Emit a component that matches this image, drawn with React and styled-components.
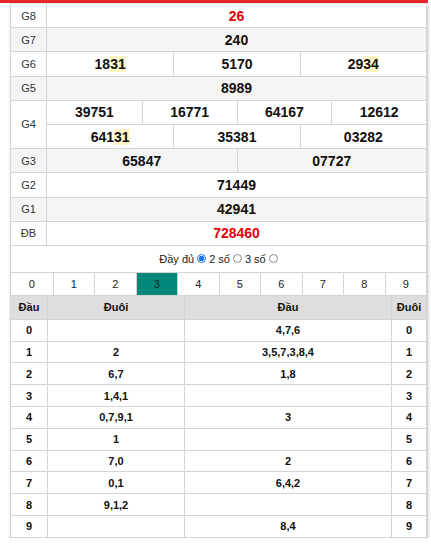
import React from "react";
import styled, { createGlobalStyle } from "styled-components";

const GlobalStyle = createGlobalStyle`
  body {
    margin: 0;
    background: #fff;
    font-family: "Liberation Sans", Arial, sans-serif;
  }
`;

const prizes = [
  { label: "G8", rows: [["26"]], red: true },
  { label: "G7", rows: [["240"]] },
  { label: "G6", rows: [["1831", "5170", "2934"]] },
  { label: "G5", rows: [["8989"]] },
  { label: "G4", rows: [["39751", "16771", "64167", "12612"], ["64131", "35381", "03282"]] },
  { label: "G3", rows: [["65847", "07727"]] },
  { label: "G2", rows: [["71449"]] },
  { label: "G1", rows: [["42941"]] },
  { label: "ĐB", rows: [["728460"]], red: true },
];

const highlighted = ["1831", "2934", "64131"];

const loto = [
  ["", "4,7,6"],
  ["2", "3,5,7,3,8,4"],
  ["6,7", "1,8"],
  ["1,4,1", ""],
  ["0,7,9,1", "3"],
  ["1", ""],
  ["7,0", "2"],
  ["0,1", "6,4,2"],
  ["9,1,2", ""],
  ["", "8,4"],
];

const Number = ({ value }) => {
  if (!highlighted.includes(value)) return value;
  return (
    <>
      {value.slice(0, -2)}
      <Mark>{value.slice(-2)}</Mark>
    </>
  );
};

const App = () => {
  return (
    <>
      <GlobalStyle />
      <TopBar />
      <Panel>
        {prizes.map((p, i) => (
          <PrizeRow key={p.label} $alt={i % 2 === 1}>
            <PrizeLabel>{p.label}</PrizeLabel>
            <PrizeValues>
              {p.rows.map((r, j) => (
                <ValueLine key={j} $cols={r.length}>
                  {r.map((v) => (
                    <ValueCell key={v} $red={p.red}>
                      <Number value={v} />
                    </ValueCell>
                  ))}
                </ValueLine>
              ))}
            </PrizeValues>
          </PrizeRow>
        ))}

        <Options>
          Đầy đủ <Radio $checked /> 2 số <Radio /> 3 số <Radio />
        </Options>

        <Tabs>
          {Array.from({ length: 10 }, (_, i) => (
            <Tab key={i} $active={i === 3}>{i}</Tab>
          ))}
        </Tabs>

        <LotoHead>
          <LotoCell>Đầu</LotoCell>
          <LotoCell>Đuôi</LotoCell>
          <LotoCell>Đầu</LotoCell>
          <LotoCell>Đuôi</LotoCell>
        </LotoHead>
        {loto.map((r, i) => (
          <LotoRow key={i}>
            <LotoCell>{i}</LotoCell>
            <LotoCell>{r[0]}</LotoCell>
            <LotoCell>{r[1]}</LotoCell>
            <LotoCell>{i}</LotoCell>
          </LotoRow>
        ))}
      </Panel>
    </>
  );
};

export default App;

const TopBar = styled.div`
  width: 428px;
  height: 3px;
  background: #e8262d;
`;

const Panel = styled.div`
  margin-left: 10px;
  width: 415px;
  border-left: 1px solid #d6d6d6;
  border-right: 1px solid #d6d6d6;
  border-top: 1px solid #e2e2e2;
  box-shadow: 1px 2px 3px rgba(0, 0, 0, 0.25);
  background: #fff;
`;

const PrizeRow = styled.div`
  display: grid;
  grid-template-columns: 36px 1fr;
  background: ${(p) => (p.$alt ? "#f4f4f4" : "#fff")};
  border-bottom: 1px solid #d4d4d4;
`;

const PrizeLabel = styled.div`
  display: flex;
  align-items: center;
  justify-content: center;
  border-right: 1px solid #d4d4d4;
  font-size: 11px;
  color: #333;
`;

const PrizeValues = styled.div`
  display: flex;
  flex-direction: column;
`;

const ValueLine = styled.div`
  display: grid;
  grid-template-columns: repeat(${(p) => p.$cols}, 1fr);
  & + & {
    border-top: 1px solid #d4d4d4;
  }
`;

const ValueCell = styled.div`
  height: 23.2px;
  display: flex;
  align-items: center;
  justify-content: center;
  font-size: 14px;
  font-weight: bold;
  color: ${(p) => (p.$red ? "#e3000f" : "#111")};
  & + & {
    border-left: 1px solid #d4d4d4;
  }
`;

const Mark = styled.span`
  background: #fff5c4;
`;

const Options = styled.div`
  height: 26px;
  display: flex;
  align-items: center;
  justify-content: center;
  gap: 3px;
  font-size: 11px;
  color: #222;
`;

const Radio = styled.span`
  display: inline-block;
  box-sizing: border-box;
  width: 9px;
  height: 9px;
  border-radius: 50%;
  border: 1px solid ${(p) => (p.$checked ? "#1a73e8" : "#8a8a8a")};
  background: ${(p) => (p.$checked ? "radial-gradient(circle, #1a73e8 0 2.5px, #fff 3px)" : "#fff")};
`;

const Tabs = styled.div`
  display: grid;
  grid-template-columns: repeat(10, 1fr);
  border-top: 1px solid #d4d4d4;
  border-bottom: 1px solid #d4d4d4;
`;

const Tab = styled.div`
  height: 22px;
  display: flex;
  align-items: center;
  justify-content: center;
  font-size: 11px;
  color: #222;
  background: ${(p) => (p.$active ? "#00897b" : "#fff")};
  & + & {
    border-left: 1px solid #d4d4d4;
  }
`;

const LotoRow = styled.div`
  display: grid;
  grid-template-columns: 36px 137px 207px 1fr;
  height: 21.8px;
  border-bottom: 1px solid #d4d4d4;
  box-sizing: border-box;
`;

const LotoHead = styled(LotoRow)`
  height: 24px;
  background: #dedede;
`;

const LotoCell = styled.div`
  display: flex;
  align-items: center;
  justify-content: center;
  font-size: 11px;
  font-weight: bold;
  color: #111;
  & + & {
    border-left: 1px solid #d4d4d4;
  }
`;
